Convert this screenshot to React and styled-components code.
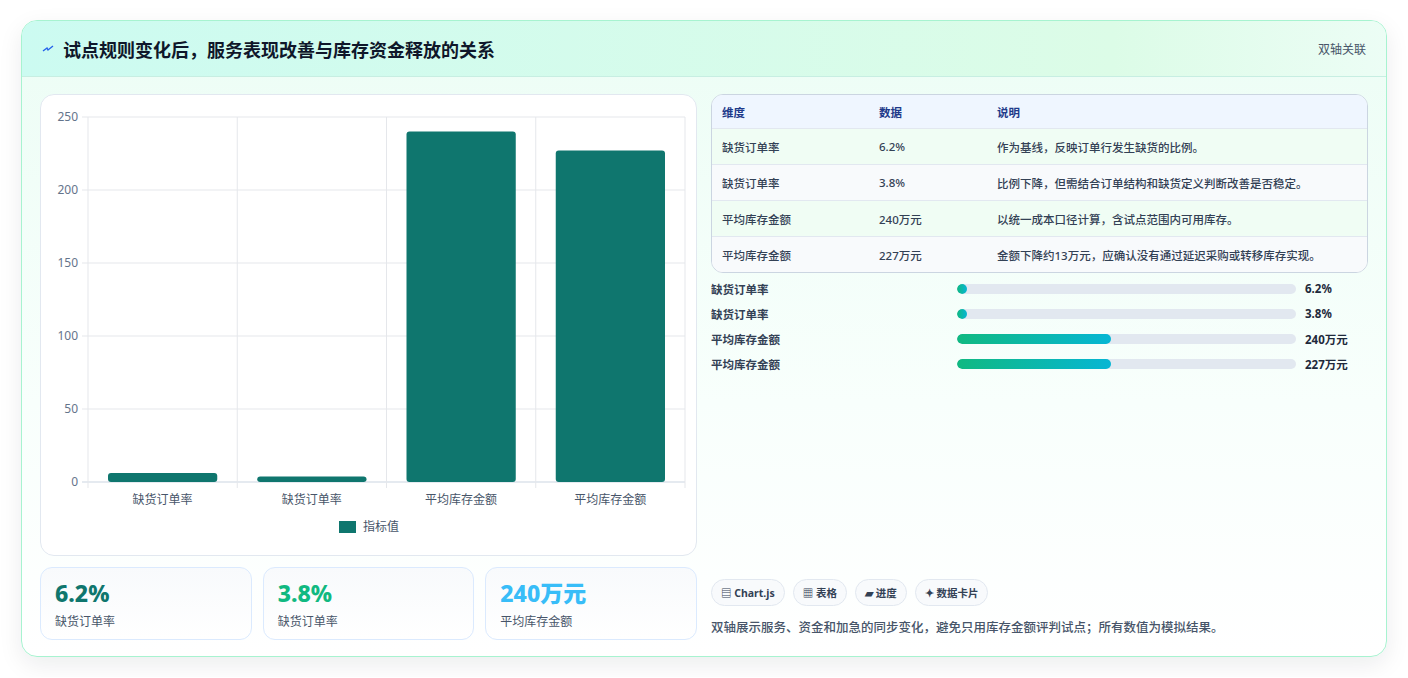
import React from 'react';
import styled, { createGlobalStyle } from 'styled-components';

const Global = createGlobalStyle`
  body { margin: 0; background: #fff; font-family: "Noto Sans", "Noto Sans CJK SC", sans-serif; }
`;

const Page = styled.div`
  padding: 20px 21px 20px 21px;
`;

const Card = styled.div`
  height: 637px;
  box-sizing: border-box;
  border: 1px solid #a7f3d0;
  border-radius: 16px;
  background: linear-gradient(180deg, #ecfdf5 0%, #f8fffc 60%, #ffffff 100%);
  box-shadow: 0 8px 24px rgba(15, 23, 42, 0.08);
  overflow: hidden;
  display: flex;
  flex-direction: column;
`;

const Header = styled.div`
  height: 55px;
  flex: none;
  display: flex;
  align-items: center;
  justify-content: space-between;
  padding: 0 20px 0 20px;
  background: linear-gradient(90deg, #ccfbf1, #dcfce7 80%, #ecfdf5);
  border-bottom: 1px solid #c7eee2;
`;

const Title = styled.h1`
  margin: 0;
  font-size: 18px;
  font-weight: 700;
  color: #0f172a;
  display: flex;
  align-items: center;
  gap: 9px;
`;

const Tag = styled.span`
  font-size: 12px;
  color: #475569;
`;

const Body = styled.div`
  flex: 1;
  display: grid;
  grid-template-columns: 657px 1fr;
  gap: 14px;
  padding: 17px 18px 18px 18px;
`;

const Col = styled.div`
  display: flex;
  flex-direction: column;
  gap: 11px;
  min-height: 0;
`;

const ChartBox = styled.div`
  height: 462px;
  box-sizing: border-box;
  background: #fff;
  border: 1px solid #e2e8f0;
  border-radius: 14px;
`;

const Kpis = styled.div`
  display: grid;
  grid-template-columns: repeat(3, 1fr);
  gap: 11px;
`;

const Kpi = styled.div`
  height: 73px;
  box-sizing: border-box;
  border: 1px solid #dbeafe;
  border-radius: 12px;
  background: linear-gradient(180deg, #f8fafc, #ffffff);
  padding: 10px 14px;
`;

const KpiValue = styled.div`
  font-size: 23px;
  font-weight: 800;
  color: ${p => p.$color};
  line-height: 30px;
`;

const KpiLabel = styled.div`
  font-size: 12px;
  color: #475569;
  margin-top: 4px;
`;

const Table = styled.div`
  border: 1px solid #cbd5e1;
  border-radius: 12px;
  overflow: hidden;
  background: #fff;
`;

const Row = styled.div`
  display: grid;
  grid-template-columns: 157px 118px 1fr;
  height: ${p => (p.$head ? 33 : 35)}px;
  align-items: center;
  padding-left: 10px;
  font-size: 11.5px;
  font-weight: ${p => (p.$head ? 700 : 500)};
  color: ${p => (p.$head ? '#1e3a8a' : '#334155')};
  background: ${p => (p.$head ? '#eff6ff' : p.$alt ? '#f8fafc' : '#f0fdf4')};
  border-top: ${p => (p.$head ? 'none' : '1px solid #e2e8f0')};
`;

const Bars = styled.div`
  display: flex;
  flex-direction: column;
  gap: 8px;
  margin-top: 7px;
`;

const BarRow = styled.div`
  display: grid;
  grid-template-columns: 246px 339px 1fr;
  align-items: center;
  height: 17px;
  font-size: 11.5px;
  font-weight: 600;
  color: #334155;
`;

const Track = styled.div`
  height: 10px;
  border-radius: 5px;
  background: #e2e8f0;
  overflow: hidden;
`;

const Fill = styled.div`
  height: 100%;
  border-radius: 5px;
  background: linear-gradient(90deg, #10b981, #06b6d4);
`;

const BarVal = styled.span`
  padding-left: 9px;
  font-weight: 700;
  color: #1e293b;
`;

const Spacer = styled.div`
  flex: 1;
`;

const Chips = styled.div`
  display: flex;
  gap: 8px;
`;

const Chip = styled.span`
  height: 27px;
  box-sizing: border-box;
  padding: 0 9px;
  display: inline-flex;
  align-items: center;
  gap: 4px;
  border: 1px solid #e2e8f0;
  border-radius: 14px;
  background: #f8fafc;
  font-size: 10.5px;
  font-weight: 700;
  color: #334155;
`;

const Note = styled.p`
  margin: 11px 0 4px 0;
  font-size: 12.5px;
  color: #475569;
  font-weight: 500;
`;

const data = [
  { name: '缺货订单率', v: 6.2, text: '6.2%', note: '作为基线，反映订单行发生缺货的比例。', w: 3 },
  { name: '缺货订单率', v: 3.8, text: '3.8%', note: '比例下降，但需结合订单结构和缺货定义判断改善是否稳定。', w: 3 },
  { name: '平均库存金额', v: 240, text: '240万元', note: '以统一成本口径计算，含试点范围内可用库存。', w: 45.4 },
  { name: '平均库存金额', v: 227, text: '227万元', note: '金额下降约13万元，应确认没有通过延迟采购或转移库存实现。', w: 45.4 },
];

const Chart = () => {
  const x0 = 47, x1 = 644, y0 = 387, yTop = 22;
  const sy = v => y0 - (v / 250) * (y0 - yTop);
  const cw = (x1 - x0) / 4;
  return (
    <svg width="655" height="460" style={{ display: 'block' }}>
      {[0, 50, 100, 150, 200, 250].map(t => (
        <g key={t}>
          <line x1={x0 - 6} x2={x1} y1={sy(t)} y2={sy(t)} stroke={t === 0 ? '#cbd5e1' : '#e5e7eb'} />
          <text x={x0 - 10} y={sy(t) + 4} textAnchor="end" fontSize="12" fill="#64748b" fontFamily="Noto Sans">{t}</text>
        </g>
      ))}
      {[0, 1, 2, 3, 4].map(i => (
        <line key={i} x1={x0 + i * cw} x2={x0 + i * cw} y1={yTop} y2={y0 + 6} stroke="#e5e7eb" />
      ))}
      {data.map((d, i) => (
        <g key={i}>
          <rect x={x0 + i * cw + 20} y={sy(d.v)} width={cw - 40} height={y0 - sy(d.v)} rx="3" fill="#0f766e" />
          <text x={x0 + i * cw + cw / 2} y={409} textAnchor="middle" fontSize="12" fill="#475569" fontFamily="Noto Sans CJK SC">{d.name}</text>
        </g>
      ))}
      <rect x="298" y="426" width="17" height="12" fill="#0f766e" />
      <text x="322" y="436" fontSize="12" fill="#475569" fontFamily="Noto Sans CJK SC">指标值</text>
    </svg>
  );
};

export default function App() {
  return (
    <Page>
      <Global />
      <Card>
        <Header>
          <Title>
            <svg width="12" height="10" viewBox="0 0 12 10"><path d="M1 7 L5 4 L6 6 L11 2" stroke="#2563eb" strokeWidth="1.4" fill="none" /></svg>
            试点规则变化后，服务表现改善与库存资金释放的关系
          </Title>
          <Tag>双轴关联</Tag>
        </Header>
        <Body>
          <Col>
            <ChartBox><Chart /></ChartBox>
            <Kpis>
              <Kpi><KpiValue $color="#0f766e">6.2%</KpiValue><KpiLabel>缺货订单率</KpiLabel></Kpi>
              <Kpi><KpiValue $color="#10b981">3.8%</KpiValue><KpiLabel>缺货订单率</KpiLabel></Kpi>
              <Kpi><KpiValue $color="#38bdf8">240万元</KpiValue><KpiLabel>平均库存金额</KpiLabel></Kpi>
            </Kpis>
          </Col>
          <Col style={{ gap: 0 }}>
            <Table>
              <Row $head><span>维度</span><span>数据</span><span>说明</span></Row>
              {data.map((d, i) => (
                <Row key={i} $alt={i % 2 === 1}><span>{d.name}</span><span>{d.text}</span><span>{d.note}</span></Row>
              ))}
            </Table>
            <Bars>
              {data.map((d, i) => (
                <BarRow key={i}>
                  <span>{d.name}</span>
                  <Track><Fill style={{ width: `${d.w}%` }} /></Track>
                  <BarVal>{d.text}</BarVal>
                </BarRow>
              ))}
            </Bars>
            <Spacer />
            <Chips>
              <Chip>▤ Chart.js</Chip>
              <Chip>▦ 表格</Chip>
              <Chip>▰ 进度</Chip>
              <Chip>✦ 数据卡片</Chip>
            </Chips>
            <Note>双轴展示服务、资金和加急的同步变化，避免只用库存金额评判试点；所有数值为模拟结果。</Note>
          </Col>
        </Body>
      </Card>
    </Page>
  );
}
